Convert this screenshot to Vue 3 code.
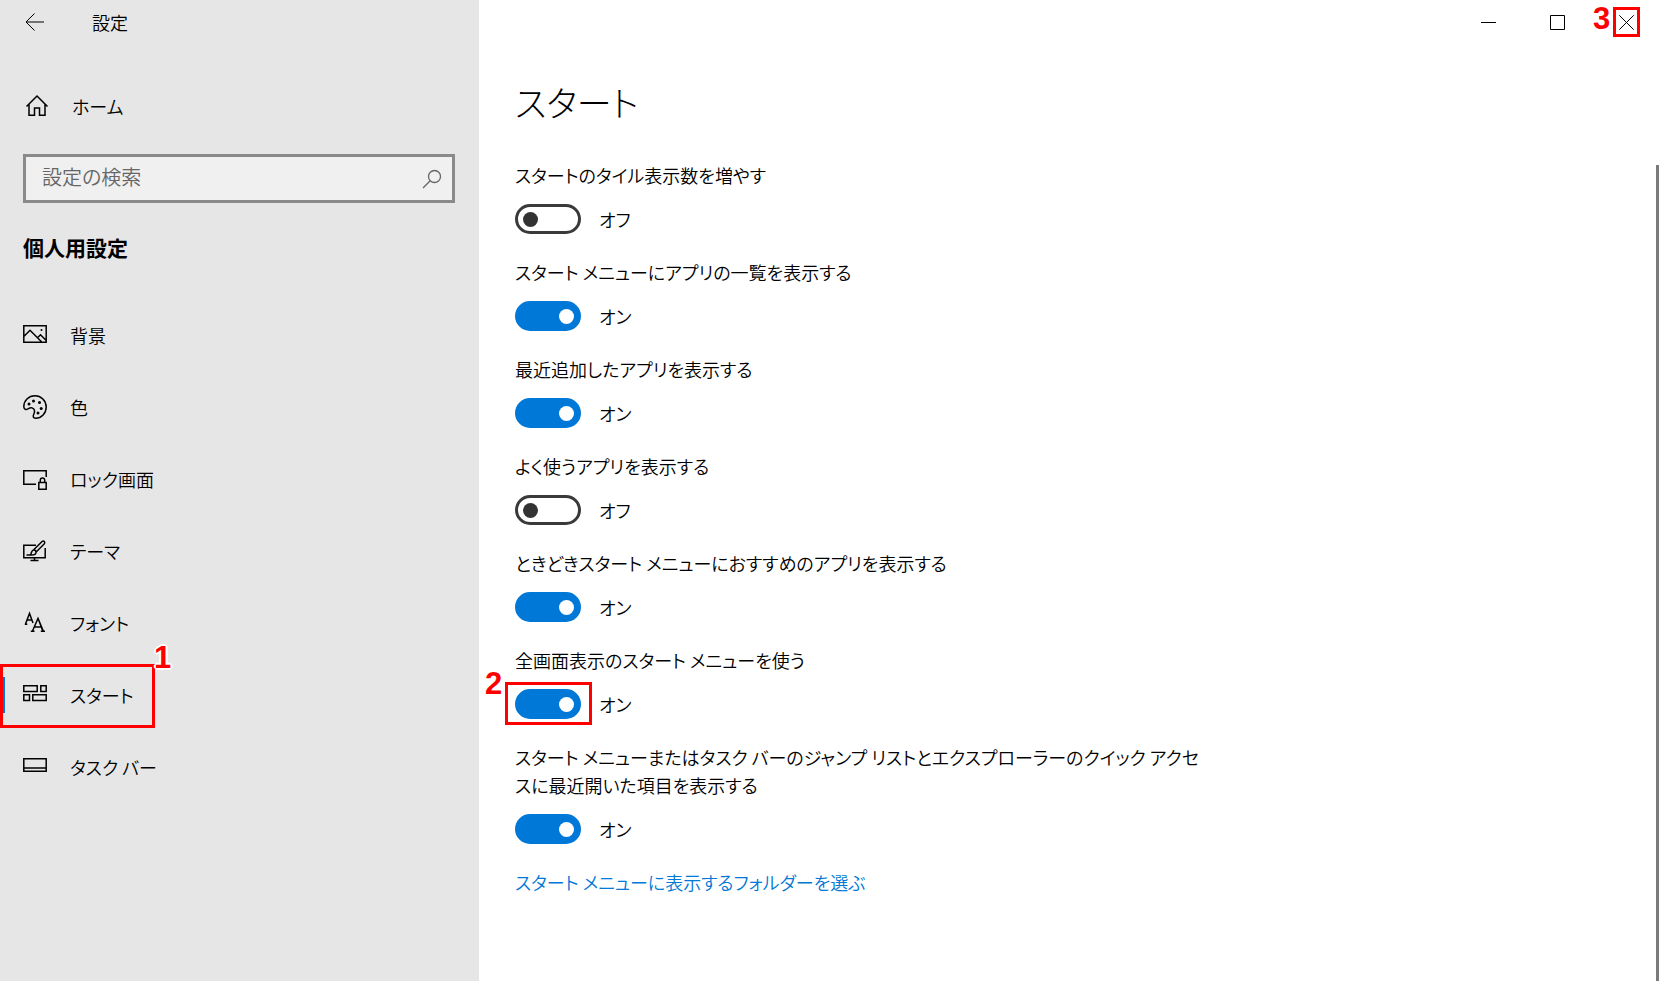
<script setup>
import { ref } from 'vue'

const query = ref('')

const navItems = ref([
  { icon: 'picture', label: '背景' },
  { icon: 'palette', label: '色' },
  { icon: 'lock', label: 'ロック画面' },
  { icon: 'theme', label: 'テーマ' },
  { icon: 'font', label: 'フォント' },
  { icon: 'start', label: 'スタート', active: true, mark: '1' },
  { icon: 'taskbar', label: 'タスク バー' },
])

const settings = ref([
  { id: 'tiles', label: 'スタートのタイル表示数を増やす', on: false },
  { id: 'apps', label: 'スタート メニューにアプリの一覧を表示する', on: true },
  { id: 'recent', label: '最近追加したアプリを表示する', on: true },
  { id: 'frequent', label: 'よく使うアプリを表示する', on: false },
  { id: 'suggest', label: 'ときどきスタート メニューにおすすめのアプリを表示する', on: true },
  { id: 'full', label: '全画面表示のスタート メニューを使う', on: true, mark: '2' },
  {
    id: 'jump',
    label: 'スタート メニューまたはタスク バーのジャンプ リストとエクスプローラーのクイック アクセスに最近開いた項目を表示する',
    on: true,
  },
])
</script>

<template>
  <div class="window">
    <aside class="sidebar">
      <header class="titlebar">
        <button class="back" type="button" aria-label="戻る">
          <svg width="20" height="18" viewBox="0 0 20 18"><path d="M9.500 .5 1 9l8.500 8.500M1 9h18" /></svg>
        </button>
        <span class="app-name">設定</span>
      </header>

      <a class="home" href="#">
        <svg class="icon" width="24" height="24" viewBox="0 0 24 24">
          <path d="M1.500 12.500 12 2l10.500 10.500M4 10.500V21.300h5.500V14h5v7.300H20V10.500" />
        </svg>
        <span>ホーム</span>
      </a>

      <label class="search">
        <input v-model="query" type="text" placeholder="設定の検索" aria-label="設定の検索" />
        <svg width="20" height="20" viewBox="0 0 20 20">
          <circle cx="12.500" cy="7.500" r="6" /><path d="M8.200 11.800 1 19" />
        </svg>
      </label>

      <h2 class="section">個人用設定</h2>

      <nav class="nav">
        <a
          v-for="item in navItems"
          :key="item.icon"
          class="nav-item"
          :class="{ active: item.active }"
          href="#"
        >
          <svg v-if="item.icon === 'picture'" class="icon" width="24" height="24" viewBox="0 0 24 24">
            <path d="M.8 2.800h22.400v16.400H.8zM.8 13.500 7 7.300l11.500 11.500M14.500 14.800l3-3 5.700 5.700" />
            <circle class="solid" cx="18.500" cy="7" r="1" />
          </svg>
          <svg v-else-if="item.icon === 'palette'" class="icon" width="24" height="24" viewBox="0 0 24 24">
            <path d="M12 .8C5.500 .8 .8 5.800 .8 11.500c0 2.500 2 3.600 3.700 2.700 1.500-.8 2.500-2 4.500-1.300 2.500 .9 3.300 3.300 1.900 6-1.200 2.300-.8 4.300 1.600 4.300 6 0 10.700-5 10.700-11.200S18 .8 12 .8z" />
            <g class="solid">
              <circle cx="6" cy="9" r="1.500" /><circle cx="10.500" cy="6" r="1.500" />
              <circle cx="16.500" cy="7.500" r="1.500" /><circle cx="18.200" cy="13.500" r="1.500" />
              <circle cx="15" cy="18" r="1.500" />
            </g>
          </svg>
          <svg v-else-if="item.icon === 'lock'" class="icon" width="24" height="24" viewBox="0 0 24 24">
            <path d="M13 17.200H.8V3.800h22.400V10M15.800 15.500h7.400v6.700h-7.400zM17.300 15.500v-2.200a2.200 2.200 0 0 1 4.400 0v2.200" />
          </svg>
          <svg v-else-if="item.icon === 'theme'" class="icon" width="24" height="24" viewBox="0 0 24 24">
            <path d="M13 6.300H.8v12.400h21.400V9M11.500 18.700v2.600M7.500 21.400h8M3.500 16h5c2.500 0 4.500-.8 4.500-2.800 0-1.300-1-2.200-2.300-2.200-2.200 0-2 2.500-3.200 4.800M10.500 11l8.300-8.200c2-1.800 4 .2 2.300 2.200l-8.200 8.300" />
          </svg>
          <svg v-else-if="item.icon === 'font'" class="icon" width="24" height="24" viewBox="0 0 24 24">
            <path d="M2.500 13 6.500 2.500 10 12M4 9h5M1.800 13.200h2.500" />
            <path d="M9.500 20 15 7.500 20.300 20M11 16h7.500M7.800 20.200h3.700M17.800 20.200h4.200M15.500 8.500l4.300 11.500" />
          </svg>
          <svg v-else-if="item.icon === 'start'" class="icon" width="24" height="24" viewBox="0 0 24 24">
            <path d="M.8 2.800h13.400v5.700H.8zM17.800 2.800h5.400v5.700h-5.400zM.8 11.800h5.700v5.700H.8zM9.800 11.800h13.400v5.700H9.800z" />
          </svg>
          <svg v-else class="icon" width="24" height="24" viewBox="0 0 24 24">
            <path d="M.8 3.800h22.400v12.400H.8zM.8 13h22.400" />
          </svg>
          <span>{{ item.label }}</span>
          <span v-if="item.mark" class="frame nav-frame"></span>
          <b v-if="item.mark" class="mark nav-mark">{{ item.mark }}</b>
        </a>
      </nav>
    </aside>

    <main class="content">
      <div class="caption">
        <button type="button" aria-label="最小化">
          <svg width="15" height="15" viewBox="0 0 15 15"><path d="M0 7.500h15" /></svg>
        </button>
        <button type="button" aria-label="最大化">
          <svg width="15" height="15" viewBox="0 0 15 15"><path d="M.5 .5h14v14H.5z" /></svg>
        </button>
        <button type="button" aria-label="閉じる">
          <svg width="15" height="15" viewBox="0 0 15 15"><path d="M.3 .3l14.400 14.400M14.700 .3.3 14.700" /></svg>
          <span class="frame close-frame"></span>
          <b class="mark close-mark">3</b>
        </button>
      </div>

      <h1>スタート</h1>

      <section v-for="s in settings" :key="s.id" class="setting">
        <label class="setting-label" :for="s.id">{{ s.label }}</label>
        <div class="setting-row">
          <span class="switch">
            <input :id="s.id" v-model="s.on" type="checkbox" role="switch" />
            <span v-if="s.mark" class="frame switch-frame"></span>
            <b v-if="s.mark" class="mark switch-mark">{{ s.mark }}</b>
          </span>
          <span>{{ s.on ? 'オン' : 'オフ' }}</span>
        </div>
      </section>

      <a class="folders" href="#">スタート メニューに表示するフォルダーを選ぶ</a>
      <div class="scrollbar"></div>
    </main>
  </div>
</template>

<style>
body {
  margin: 0;
  background: #fff;
}
</style>

<style scoped>
* {
  box-sizing: border-box;
}
.window {
  display: flex;
  min-height: 100vh;
  font-family: "Noto Sans CJK JP", sans-serif;
  font-feature-settings: "palt";
  font-size: 18px;
  font-weight: 350;
  line-height: 28px;
  color: #000;
}
a {
  color: inherit;
  text-decoration: none;
}
button {
  padding: 0;
  border: 0;
  background: none;
  color: inherit;
  font: inherit;
}
svg {
  display: block;
  flex: none;
  fill: none;
  stroke: #000;
}
.icon {
  stroke-width: 1.5;
}
.solid {
  fill: #000;
  stroke: none;
}
.sidebar {
  flex: none;
  width: 479px;
  background: #e6e6e6;
}
.titlebar {
  display: flex;
  align-items: center;
  height: 43px;
  padding-left: 25px;
}
.app-name {
  margin-left: 47px;
}
.home {
  display: flex;
  align-items: center;
  gap: 23px;
  height: 48px;
  margin-top: 39px;
  padding-left: 25px;
}
.search {
  display: flex;
  align-items: center;
  height: 49px;
  margin: 24px 24px 0 23px;
  padding: 0 10px 0 16px;
  border: 3px solid #8a8a8a;
  background: #f0f0f0;
}
.search input {
  flex: 1;
  min-width: 0;
  padding: 0 0 3px;
  border: 0;
  outline: 0;
  background: none;
  color: #000;
  font: inherit;
  font-size: 20px;
}
.search input::placeholder {
  color: #666;
  opacity: 1;
}
.search svg {
  stroke: #666;
  stroke-width: 1.3;
}
.section {
  margin: 30px 0 0 23px;
  font-size: 21px;
  font-weight: 700;
  line-height: 28px;
}
.nav {
  margin-top: 38px;
}
.nav-item {
  position: relative;
  display: flex;
  align-items: center;
  gap: 23px;
  height: 72px;
  padding-left: 23px;
}
.nav-item.active::before {
  content: "";
  position: absolute;
  left: 0;
  top: 18px;
  width: 5px;
  height: 36px;
  background: #0078d7;
}
.frame {
  position: absolute;
  border: 3px solid #f00;
}
.mark {
  position: absolute;
  color: #f00;
  font-family: "Liberation Sans", Arial, sans-serif;
  font-size: 31px;
  font-weight: 700;
  line-height: 32px;
  text-shadow: 0 0 2px #fff, 2px 0 0 #fff, -2px 0 0 #fff, 0 2px 0 #fff, 0 -2px 0 #fff, 1px 1px 0 #fff, -1px -1px 0 #fff, 1px -1px 0 #fff, -1px 1px 0 #fff;
}
.nav-frame {
  left: 0;
  top: 5px;
  width: 155px;
  height: 64px;
}
.nav-mark {
  left: 154px;
  top: -17px;
}
.content {
  position: relative;
  flex: 1;
  min-width: 0;
  padding-left: 36px;
}
.caption {
  display: flex;
  justify-content: flex-end;
  height: 45px;
}
.caption button {
  position: relative;
  display: grid;
  place-items: center;
  width: 69px;
}
.close-frame {
  left: 21px;
  top: 7px;
  width: 27px;
  height: 30px;
}
.close-mark {
  left: 1px;
  top: 3px;
}
h1 {
  margin: 29px 0 31px;
  font-size: 35px;
  font-weight: 300;
  line-height: 56px;
}
.setting {
  margin-bottom: 24px;
}
.setting-label {
  display: block;
  max-width: 690px;
}
.setting-row {
  display: flex;
  align-items: center;
  gap: 18px;
  margin-top: 15px;
  height: 30px;
}
.switch {
  position: relative;
  display: flex;
}
.switch input {
  appearance: none;
  display: flex;
  align-items: center;
  width: 66px;
  height: 30px;
  margin: 0;
  padding: 0 4px 0 5px;
  border: 3px solid #3a3a3a;
  border-radius: 15px;
  background: #fff;
}
.switch input::before {
  content: "";
  width: 15px;
  height: 15px;
  border-radius: 50%;
  background: #333;
}
.switch input:checked {
  justify-content: flex-end;
  border-color: #0078d7;
  background: #0078d7;
}
.switch input:checked::before {
  background: #fff;
}
.switch-frame {
  left: -10px;
  top: -7px;
  width: 87px;
  height: 43px;
  pointer-events: none;
}
.switch-mark {
  left: -30px;
  top: -21px;
}
.folders {
  color: #0078d7;
}
.scrollbar {
  position: absolute;
  right: 2px;
  top: 165px;
  bottom: 0;
  width: 3px;
  background: #7a7a7a;
}
</style>
